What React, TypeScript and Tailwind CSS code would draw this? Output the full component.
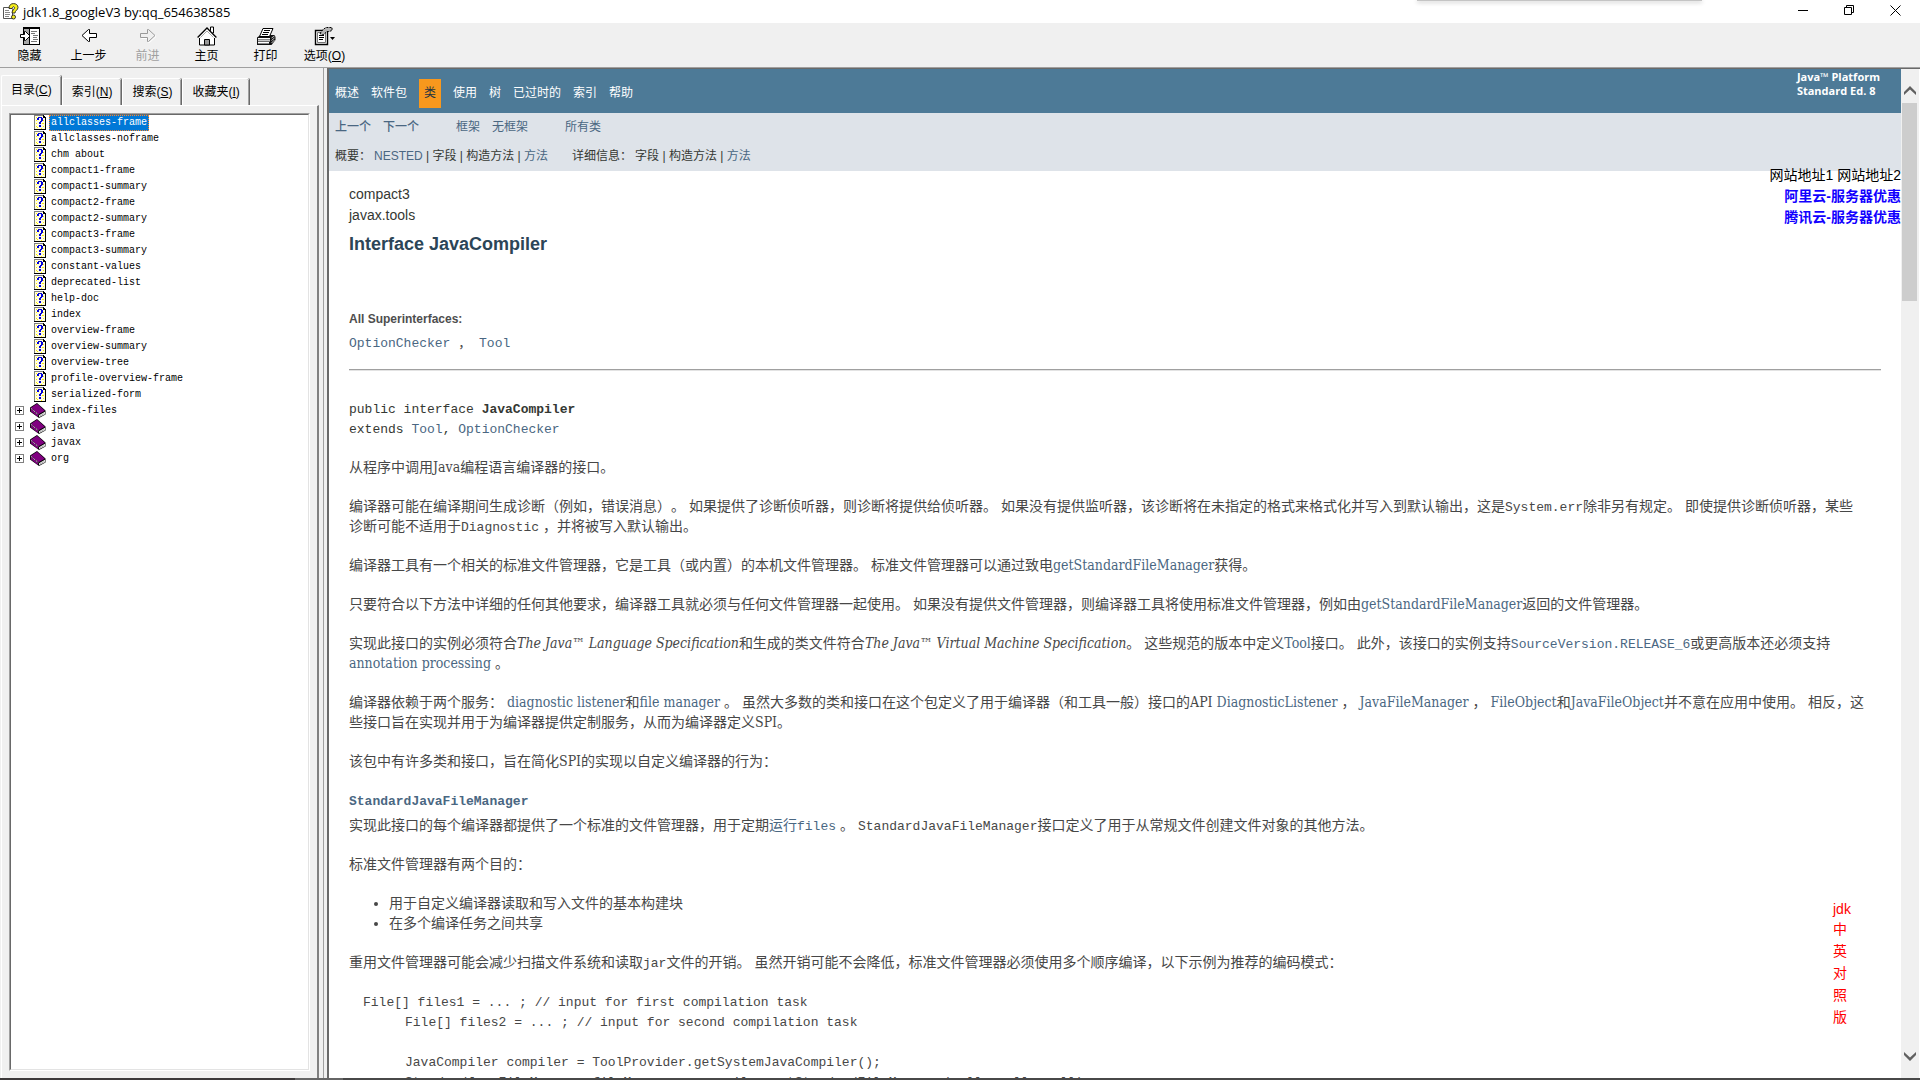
import type { ReactNode } from "react";

const pages = [
  "allclasses-frame",
  "allclasses-noframe",
  "chm about",
  "compact1-frame",
  "compact1-summary",
  "compact2-frame",
  "compact2-summary",
  "compact3-frame",
  "compact3-summary",
  "constant-values",
  "deprecated-list",
  "help-doc",
  "index",
  "overview-frame",
  "overview-summary",
  "overview-tree",
  "profile-overview-frame",
  "serialized-form",
];

const books = ["index-files", "java", "javax", "org"];

const SANS = "font-['Liberation_Sans','Noto_Sans_CJK_SC',sans-serif]";

/* ---------- icons ---------- */

function AppIcon() {
  return (
    <svg width="17" height="17" viewBox="0 0 17 17">
      <path d="M1.500 4.500h7l2 2v9h-9z" fill="#fff" stroke="#555" />
      <path d="M3 7.500h4M3 9.500h5M3 11.500h5M3 13.500h4" stroke="#888" />
      <path
        d="M7 5.500C7 2 9 .6 11.500.6s4.500 1.400 4.500 3.900c0 2.500-3 3-3 5.500h-3c0-3 2.500-3.500 2.500-5.300 0-1.400-2.200-1.400-2.200.8z"
        fill="#f5ee1c"
        stroke="#222"
        strokeWidth=".9"
      />
      <circle cx="11.500" cy="14" r="2" fill="#f5ee1c" stroke="#222" strokeWidth=".9" />
    </svg>
  );
}

function HideIcon() {
  return (
    <svg width="22" height="20" viewBox="0 0 22 20" shapeRendering="crispEdges">
      <path d="M4 1h17v18H4z" fill="#000" />
      <path d="M5 3h5v15H5z" fill="#a8a8a8" />
      <path d="M11 3h9v15h-9z" fill="#fff" />
      <path d="M12 5h6v1h-6zM12 7h4v1h-4zM14 9h5v1h-5zM14 11h4v1h-4zM14 13h5v1h-5zM12 15h6v1h-6z" fill="#777" />
      <path d="M1.500 8.500h4v-3h1l4.500 4.500-4.500 4.500h-1v-3h-4z" fill="#fff" stroke="#000" shapeRendering="auto" />
    </svg>
  );
}

function ArrowIcon({ forward = false }: { forward?: boolean }) {
  return forward ? (
    <svg width="20" height="20" viewBox="0 0 20 20">
      <path d="M3.500 8.500h7v-4h1l6.500 6-6.500 6h-1v-4h-7z" fill="none" stroke="#fff" />
      <path d="M2.500 7.500h7v-4h1l6.500 6-6.500 6h-1v-4h-7z" fill="#f0f0f0" stroke="#9a9a9a" />
    </svg>
  ) : (
    <svg width="20" height="20" viewBox="0 0 20 20">
      <path d="M17.500 7.500h-7v-4h-1l-6.500 6 6.500 6h1v-4h7z" fill="#fff" stroke="#000" />
    </svg>
  );
}

function HomeIcon() {
  return (
    <svg width="20" height="20" viewBox="0 0 20 20">
      <path d="M13.500 1h3v6h-3z" fill="#fff" stroke="#000" />
      <path d="M2.500 10.500h15v8.500h-15z" fill="#fff" stroke="#000" />
      <path d="M.6 10.800 10 1.400l9.400 9.400-1 1.200H1.600z" fill="#fff" />
      <path d="M.6 11.500 10 2l9.400 9.500" fill="none" stroke="#000" strokeWidth="1.300" />
      <path d="M3.500 11.500 10 5l6.500 6.500" fill="none" stroke="#aaa" />
      <path d="M7.500 13.500h5V19h-5z" fill="#999" stroke="#000" />
    </svg>
  );
}

function PrintIcon() {
  return (
    <svg width="20" height="20" viewBox="0 0 20 20">
      <path d="M1 11.500 4.500 9h14l1 2v3l-4 5H1z" fill="#111" />
      <path d="M7 2.500h10l-3.500 8H3.500z" fill="#fff" stroke="#000" />
      <path d="M8 4.500h6M7 6.500h6M6 8.500h6" stroke="#000" />
      <path d="M2 12h12v1.500H2zM2 16h11v1.500H2z" fill="#fff" />
      <path d="M2 14h12v1.500H2z" fill="#c8c8c8" />
      <path d="m15.500 12 3-2M15.500 14.500l3-2.500M15.500 17l3-3" stroke="#c8c8c8" />
    </svg>
  );
}

function OptionsIcon() {
  return (
    <svg width="22" height="20" viewBox="0 0 22 20">
      <path d="M1.500 4.500h12v14h-12z" fill="#fff" stroke="#000" strokeWidth="1.400" />
      <path d="M3.500 6.500h8v10h-8z" fill="#fff" stroke="#777" />
      <path d="M5 9.500h5M5 11.500h5M5 13.500h4" stroke="#000" />
      <path d="m6 7.500 3-4 3-2h6v3l-3 1h-2l-4 3.500z" fill="#b4b4b4" stroke="#000" strokeDasharray="2 1" />
      <path d="M16 11h5l-2.500 3z" fill="#000" />
    </svg>
  );
}

function PageIcon() {
  return (
    <svg width="12" height="15" viewBox="0 0 12 15" shapeRendering="crispEdges">
      <path d="M0 0h9l3 3v12H0z" fill="#000" />
      <path d="M0 0h9v1H1v13H0z" fill="#808080" />
      <path d="M1 1h8v2h2v11H1z" fill="#fffde0" />
      <path
        d="M2 2h1v1H2zM8 3h1v1H8zM2 5h1v1H2zM9 5h1v1H9zM2 8h1v1H2zM8 8h2v1H8zM2 11h1v1H2zM9 11h1v1H9zM3 12h1v1H3zM7 13h1v1H7z"
        fill="#ffee00"
      />
      <path d="M4 2h4v1H4zM3 3h2v2H3zM7 3h2v3H7zM6 6h2v1H6zM5 7h2v2H5zM5 10h2v2H5z" fill="#0000d8" />
    </svg>
  );
}

function BookIcon() {
  return (
    <svg width="16" height="15" viewBox="0 0 16 15">
      <path d="M0 4.500 7 0l8.500 7.500v4L9 15 0 8.500z" fill="#000" />
      <path d="M1 4.800 7 .8l7.800 6.900-6.300 3.500z" fill="#800080" />
      <path d="M.8 5.800 8 12v2L.8 8.300z" fill="#800080" />
      <path d="m9 12.200 6-3.400v2.400L9 14.300z" fill="#f4f4f4" />
      <path d="M.8 5.200 8.300 11.600" stroke="#ecd0ec" strokeDasharray="1.500 .7" />
      <path d="m9.500 13.200 5-2.800" stroke="#888" strokeWidth=".6" />
    </svg>
  );
}

function ExpandIcon() {
  return (
    <svg width="9" height="9" viewBox="0 0 9 9" shapeRendering="crispEdges">
      <path d="M0 0h9v9H0z" fill="#808080" />
      <path d="M1 1h7v7H1z" fill="#fff" />
      <path d="M2 4h5v1H2zM4 2h1v5H4z" fill="#000" />
    </svg>
  );
}

/* ---------- small building blocks ---------- */

function A({ children }: { children: ReactNode }) {
  return (
    <a href="#" className="text-[#4A6782]">
      {children}
    </a>
  );
}

function Code({ children }: { children: ReactNode }) {
  return (
    <code className="font-['Liberation_Mono','Noto_Sans_CJK_SC',monospace] text-[13px] leading-none">
      {children}
    </code>
  );
}

function ToolButton({ icon, label, disabled }: { icon: ReactNode; label: ReactNode; disabled?: boolean }) {
  return (
    <button
      disabled={disabled}
      className="flex w-[59px] flex-col items-center gap-[2px] pt-[3px] text-xs leading-4 disabled:text-[#a0a0a0]"
    >
      {icon}
      <span className="whitespace-nowrap">{label}</span>
    </button>
  );
}

function Tab({ name, hotkey, active }: { name: string; hotkey: string; active?: boolean }) {
  return (
    <button
      role="tab"
      aria-selected={!!active}
      className={
        "rounded-t-xs border-t border-l border-t-white border-l-white px-[9px] text-xs shadow-[1px_0_0_#696969,inset_-1px_0_0_#a0a0a0] " +
        (active ? "h-[30px] pb-px" : "h-[27px] pb-px")
      }
    >
      {name}(<u>{hotkey}</u>)
    </button>
  );
}

/* ---------- window chrome ---------- */

function TitleBar() {
  return (
    <header className="relative flex h-[23px] shrink-0 items-center justify-between bg-white">
      <div className="flex items-center gap-1 pl-[2px]">
        <AppIcon />
        <h1 className="font-['Open_Sans','Noto_Sans',sans-serif] text-[13px] leading-4">
          jdk1.8_googleV3 by:qq_654638585
        </h1>
      </div>
      <div className="absolute top-0 right-[218px] h-px w-[285px] bg-[#c4c4c4] shadow-[0_1px_4px_#888]" />
      <div className="flex h-full items-center pr-[2px] pb-[3px]">
        <button aria-label="最小化" className="flex w-[46px] justify-center">
          <svg width="11" height="11" viewBox="0 0 11 11" shapeRendering="crispEdges">
            <path d="M0 5h10v1H0z" />
          </svg>
        </button>
        <button aria-label="还原" className="flex w-[46px] justify-center">
          <svg width="11" height="11" viewBox="0 0 11 11" fill="none" stroke="#000">
            <path d="M.5 2.500h7v7h-7zM2.500 2.500v-2h7v7h-2" />
          </svg>
        </button>
        <button aria-label="关闭" className="flex w-[46px] justify-center">
          <svg width="11" height="11" viewBox="0 0 11 11" stroke="#000">
            <path d="m.5.5 10 10M10.500.5l-10 10" />
          </svg>
        </button>
      </div>
    </header>
  );
}

function ToolBar() {
  return (
    <div className="flex h-11 shrink-0">
      <ToolButton icon={<HideIcon />} label="隐藏" />
      <ToolButton icon={<ArrowIcon />} label="上一步" />
      <ToolButton icon={<ArrowIcon forward />} label="前进" disabled />
      <ToolButton icon={<HomeIcon />} label="主页" />
      <ToolButton icon={<PrintIcon />} label="打印" />
      <ToolButton icon={<OptionsIcon />} label={<>选项(<u>O</u>)</>} />
    </div>
  );
}

function Sidebar() {
  return (
    <aside className="flex w-[324px] shrink-0 flex-col border-r border-[#a0a0a0] pt-[7px] pr-1 pl-px">
      <div role="tablist" className="flex items-end gap-px">
        <Tab name="目录" hotkey="C" active />
        <Tab name="索引" hotkey="N" />
        <Tab name="搜索" hotkey="S" />
        <Tab name="收藏夹" hotkey="I" />
      </div>
      <div className="flex min-h-0 flex-1 flex-col border-t border-r-2 border-l border-t-white border-r-[#808080] border-l-white pt-[7px] pr-[7px] pb-[7px] pl-[7px]">
        <div className="flex-1 border border-t-[#a0a0a0] border-r-white border-b-white border-l-[#a0a0a0]">
          <ul
            role="tree"
            className="h-full border border-t-[#696969] border-r-[#e3e3e3] border-b-[#e3e3e3] border-l-[#696969] bg-white pl-1 font-['Liberation_Mono',monospace] text-[10px]"
          >
            {pages.map((page, i) => (
              <li key={page} role="treeitem" aria-selected={i === 0}>
                <button className="flex h-4 items-start gap-[3px] pl-[19px]">
                  <PageIcon />
                  <span
                    className={
                      i === 0
                        ? "border border-dotted border-[#ff8728] bg-[#0078d7] px-px leading-[14px] text-white"
                        : "px-[2px] leading-4"
                    }
                  >
                    {page}
                  </span>
                </button>
              </li>
            ))}
            {books.map((book) => (
              <li key={book} role="treeitem" aria-expanded="false" aria-selected={false}>
                <button className="flex h-4 items-start">
                  <span className="pt-[3px]">
                    <ExpandIcon />
                  </span>
                  <span className="pr-[3px] pl-[6px]">
                    <BookIcon />
                  </span>
                  <span className="px-[2px] leading-4">{book}</span>
                </button>
              </li>
            ))}
          </ul>
        </div>
      </div>
    </aside>
  );
}

/* ---------- javadoc page ---------- */

function DocNav() {
  return (
    <nav className="text-xs">
      <div className="flex h-11 items-start justify-between bg-[#4D7A97] pr-[21px] pl-[6px] text-white">
        <ul className="flex items-center gap-3 pt-[10px] leading-[29px]">
          <li><a href="#">概述</a></li>
          <li><a href="#">软件包</a></li>
          <li className="bg-[#F8981D] px-[5px] text-[#253441]">类</li>
          <li><a href="#">使用</a></li>
          <li><a href="#">树</a></li>
          <li><a href="#">已过时的</a></li>
          <li><a href="#">索引</a></li>
          <li><a href="#">帮助</a></li>
        </ul>
        <div className="pt-px font-['Open_Sans','Noto_Sans',sans-serif] text-[11px] leading-[14px] font-bold">
          Java™ Platform
          <br />
          Standard Ed. 8
        </div>
      </div>
      <div className="flex flex-col gap-[13px] bg-[#dee3e9] pt-[6px] pb-[7px] pl-[6px] leading-4 text-[#353833]">
        <div className="flex gap-[37px]">
          <div className="flex gap-3 font-medium">
            <A>上一个</A>
            <A>下一个</A>
          </div>
          <div className="flex gap-3">
            <A>框架</A>
            <A>无框架</A>
          </div>
          <A>所有类</A>
        </div>
        <div className="flex gap-6">
          <div className="flex gap-[3px]">
            <span>概要：</span>
            <span>
              <A>NESTED</A> | 字段 | 构造方法 | <A>方法</A>
            </span>
          </div>
          <div className="flex gap-[3px]">
            <span>详细信息：</span>
            <span>
              字段 | 构造方法 | <A>方法</A>
            </span>
          </div>
        </div>
      </div>
    </nav>
  );
}

function DocBody() {
  return (
    <article className="px-5 pt-[13px] text-sm text-[#474747]">
      <div className="leading-[21px] text-[#353833]">
        <div>compact3</div>
        <div>javax.tools</div>
      </div>
      <h2 className="mt-[6px] text-lg leading-6 font-bold text-[#2c4557]">Interface JavaCompiler</h2>

      <dl className="mt-[55px]">
        <dt className="text-xs leading-4 font-bold text-[#4E4E4E]">All Superinterfaces:</dt>
        <dd className="mt-[5px] leading-5 whitespace-pre">
          <Code>
            <A>OptionChecker</A> ， <A>Tool</A>
          </Code>
        </dd>
      </dl>
      <hr className="mt-[17px] h-[2px] border-t border-b border-t-[#a0a0a0] border-b-[#e3e3e3]" />

      <div className="mt-[27px] leading-5 text-[#353833]">
        <Code>
          public interface <b>JavaCompiler</b>
          <br />
          extends <A>Tool</A>, <A>OptionChecker</A>
        </Code>
      </div>

      <div className="mt-[19px] flex flex-col gap-[19px] pr-4 font-['DejaVu_Serif_Condensed','Noto_Sans_CJK_SC',serif] leading-5 [text-spacing-trim:space-all]">
        <p>从程序中调用Java编程语言编译器的接口。</p>
        <p>
          编译器可能在编译期间生成诊断（例如，错误消息）。 如果提供了诊断侦听器，则诊断将提供给侦听器。
          如果没有提供监听器，该诊断将在未指定的格式来格式化并写入到默认输出，这是<Code>System.err</Code>除非另有规定。
          即使提供诊断侦听器，某些诊断可能不适用于<Code>Diagnostic</Code> ，并将被写入默认输出。
        </p>
        <p>
          编译器工具有一个相关的标准文件管理器，它是工具（或内置）的本机文件管理器。
          标准文件管理器可以通过致电<A>getStandardFileManager</A>获得。
        </p>
        <p>
          只要符合以下方法中详细的任何其他要求，编译器工具就必须与任何文件管理器一起使用。
          如果没有提供文件管理器，则编译器工具将使用标准文件管理器，例如由<A>getStandardFileManager</A>返回的文件管理器。
        </p>
        <p>
          实现此接口的实例必须符合<i>The Java™ Language Specification</i>和生成的类文件符合<i>The Java™ Virtual Machine Specification</i>。
          {" "}这些规范的版本中定义<A>Tool</A>接口。
          此外，该接口的实例支持<Code><A>SourceVersion.RELEASE_6</A></Code>或更高版本还必须支持
          <A>annotation processing</A> 。
        </p>
        <p>
          编译器依赖于两个服务： <A>diagnostic listener</A>和<A>file manager</A> 。
          虽然大多数的类和接口在这个包定义了用于编译器（和工具一般）接口的API <A>DiagnosticListener</A> ，{" "}
          <A>JavaFileManager</A> ， <A>FileObject</A>和<A>JavaFileObject</A>并不意在应用中使用。
          相反，这些接口旨在实现并用于为编译器提供定制服务，从而为编译器定义SPI。
        </p>
        <p>该包中有许多类和接口，旨在简化SPI的实现以自定义编译器的行为：</p>
        <dl>
          <dt className="font-bold">
            <Code><A>StandardJavaFileManager</A></Code>
          </dt>
          <dd className="mt-[5px] flex flex-col gap-[19px]">
            <p>
              实现此接口的每个编译器都提供了一个标准的文件管理器，用于定期<A>运行<Code>files</Code></A> 。{" "}
              <Code>StandardJavaFileManager</Code>接口定义了用于从常规文件创建文件对象的其他方法。
            </p>
            <p>标准文件管理器有两个目的：</p>
            <ul className="list-disc pl-10">
              <li>用于自定义编译器读取和写入文件的基本构建块</li>
              <li>在多个编译任务之间共享</li>
            </ul>
            <p>
              重用文件管理器可能会减少扫描文件系统和读取<Code>jar</Code>文件的开销。
              虽然开销可能不会降低，标准文件管理器必须使用多个顺序编译，以下示例为推荐的编码模式：
            </p>
            <pre className="pt-[2px] pl-[14px] font-['Liberation_Mono',monospace] text-[13px]">
              {"File[] files1 = ... ; // input for first compilation task\n"}
              <span className="block pl-[42px]">
                {`File[] files2 = ... ; // input for second compilation task

JavaCompiler compiler = ToolProvider.getSystemJavaCompiler();
StandardJavaFileManager fileManager = compiler.getStandardFileManager(null, null, null);`}
              </span>
            </pre>
          </dd>
        </dl>
      </div>
    </article>
  );
}

function ScrollBar() {
  return (
    <div className="flex w-[18px] shrink-0 flex-col bg-[#f0f0f0] pr-[2px] pl-px">
      <div className="flex h-[34px] items-end justify-center pb-2">
        <svg width="12" height="9" viewBox="0 0 12 9">
          <path d="M0 6 6 0l6 6v3L6 3.500 0 9z" fill="#606060" />
        </svg>
      </div>
      <div className="h-[198px] bg-[#cdcdcd]" />
      <div className="flex flex-1 items-end justify-center pb-[17px]">
        <svg width="12" height="9" viewBox="0 0 12 9">
          <path d="M0 3 6 9l6-6V0L6 5.500 0 0z" fill="#606060" />
        </svg>
      </div>
    </div>
  );
}

export default function App() {
  return (
    <div lang="zh-CN" className={`flex h-screen flex-col overflow-hidden bg-[#f0f0f0] text-black ${SANS}`}>
      <TitleBar />
      <ToolBar />
      <div className="flex min-h-0 flex-1 border-t border-[#a0a0a0]">
        <Sidebar />
        <div className="ml-[3px] flex min-w-0 flex-1 border-t border-l-2 border-[#696969]">
          <main className="relative min-w-0 flex-1 overflow-hidden bg-white">
            <DocNav />
            <DocBody />
            <div className="absolute top-24 right-0 text-right text-sm leading-[21px]">
              <div>网站地址1 网站地址2</div>
              <a href="#" className="block font-bold text-[#1200ff]">阿里云-服务器优惠</a>
              <a href="#" className="block font-bold text-[#1200ff]">腾讯云-服务器优惠</a>
            </div>
            <div className="absolute right-[50px] bottom-[50px] w-[18px] text-sm leading-[22px] text-[#ff0000]">
              <div className="leading-[18px]">jdk</div>
              {["中", "英", "对", "照", "版"].map((ch) => (
                <div key={ch}>{ch}</div>
              ))}
            </div>
          </main>
          <ScrollBar />
          <div className="w-px bg-white" />
        </div>
      </div>
      <footer className="flex h-[2px] shrink-0 bg-[#484848]">
        <div className="w-[295px] bg-[#3c393a]" />
        <div className="w-12 bg-[#666]" />
      </footer>
    </div>
  );
}
